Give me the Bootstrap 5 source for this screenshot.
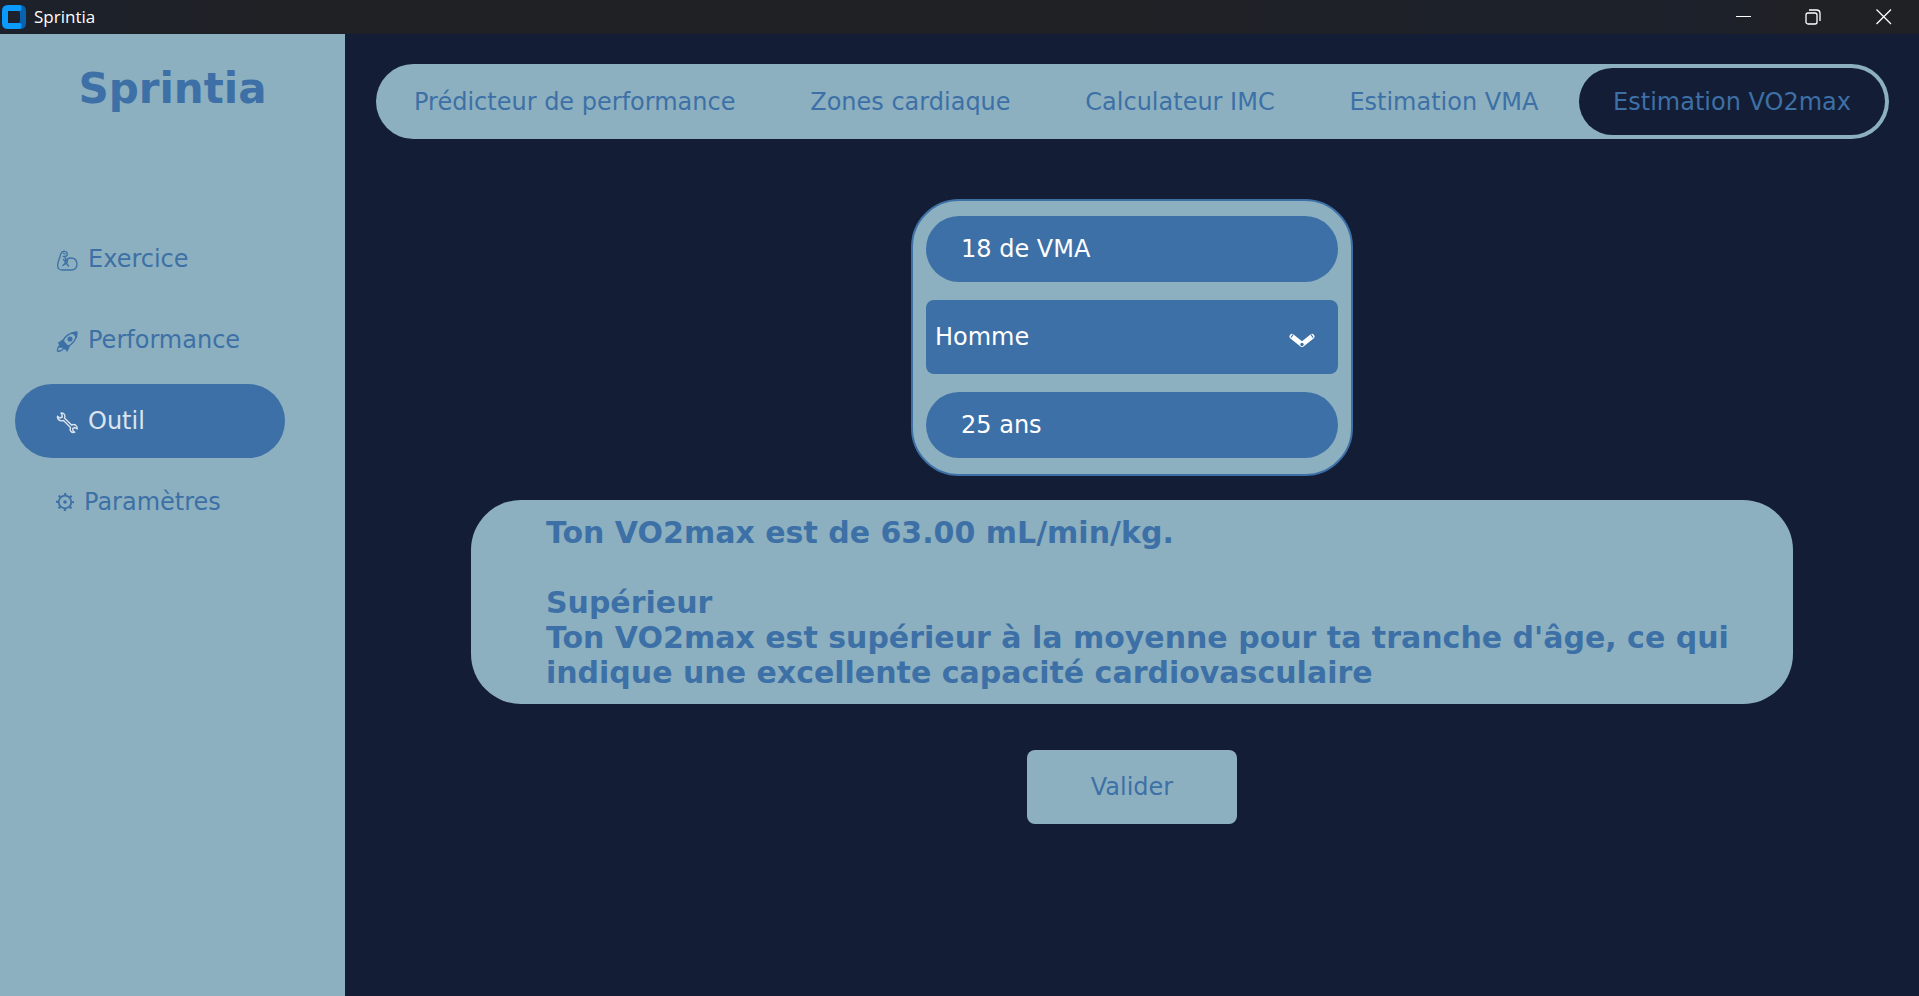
<!DOCTYPE html>
<html lang="fr">
<head>
<meta charset="utf-8">
<meta name="viewport" content="width=device-width, initial-scale=1">
<title>Sprintia</title>
<link href="https://cdn.jsdelivr.net/npm/bootstrap@5.3.0/dist/css/bootstrap.min.css" rel="stylesheet">
<style>
  :root { --night: #131d35; --mist: #8cb0c0; --ocean: #3d70a6; }
  body { background: var(--night); color: var(--ocean); font: 24px/28px "DejaVu Sans", sans-serif; }
  .titlebar { height: 34px; padding-left: 2px; background: linear-gradient(90deg, #1c212b, #202124 18%, #202124 50%, #1c212b 88%, #202124 95%); color: #fff; font: 17px/24px "Open Sans", sans-serif; }
  .titlebar button { width: 70px; height: 34px; }
  .sidebar { width: 345px; background: var(--mist); }
  .brand { margin: 30px 0 108px; font-size: 42px; line-height: 50px; font-weight: 700; }
  .side-nav { margin-left: 15px; }
  .side-link { width: 270px; height: 74px; margin-bottom: 7px; padding-left: 41px; border-radius: 37px; color: var(--ocean); }
  .side-link svg { margin-right: 8px; }
  .side-link.active { background: var(--ocean); color: #dce4ee; }
  .tabs { margin: 30px 30px 0 31px; background: var(--mist); border-radius: 38px; padding: 4px; }
  .tab-link { height: 67px; padding: 0 34px; border-radius: 34px; color: var(--ocean); }
  .tab-link.active { background: var(--night); }
  .form-panel { width: 442px; margin-top: 60px; padding: 15px 13px 16px; gap: 18px; background: var(--mist); border: 2px solid var(--ocean); border-radius: 48px; }
  .field { height: 66px; padding: 0 35px; border: 0; border-radius: 33px; background: var(--ocean); color: #fff; }
  .field-select { display: block; height: 74px; padding: 0 9px; border: 0; border-radius: 8px; background: var(--ocean); color: #fff; appearance: none; }
  .chevron { right: 23px; top: 33px; pointer-events: none; }
  .result { width: 84%; margin-top: 24px; padding: 15px 55px 14px 75px; border-radius: 50px; background: var(--mist); font-size: 30px; line-height: 35px; }
  .submit { width: 210px; height: 74px; margin-top: 46px; border: 0; border-radius: 8px; background: var(--mist); color: var(--ocean); }
</style>
</head>
<body class="d-flex flex-column min-vh-100">
<header class="titlebar d-flex align-items-center flex-shrink-0">
  <svg class="me-2" width="24" height="24" viewBox="0 0 24 24" aria-hidden="true">
    <path d="M17 0h1q6 0 6 6v12q0 6-6 6h-1z" fill="#0763b0"/>
    <path d="M6 0h11q2.500 0 2.500 3t-2.500 3H6v12h11q2.500 0 2.500 3t-2.500 3H6q-6 0-6-6V6q0-6 6-6z" fill="#0b9bff"/>
    <rect x="6" y="6" width="12" height="12" rx="2" fill="#1c212b"/>
  </svg>
  <span>Sprintia</span>
  <div class="ms-auto d-flex">
    <button type="button" class="btn p-0 border-0 rounded-0 text-white d-flex align-items-center justify-content-center" aria-label="Réduire"><svg width="16" height="16"><path d="M0 7.500h15" stroke="currentColor"/></svg></button>
    <button type="button" class="btn p-0 border-0 rounded-0 text-white d-flex align-items-center justify-content-center" aria-label="Restaurer"><svg width="18" height="16" fill="none" stroke="currentColor" stroke-width="1.300"><rect x="1" y="4" width="11" height="11" rx="2"/><path d="M4 1h7.500q3.500 0 3.500 3.500V12"/></svg></button>
    <button type="button" class="btn p-0 border-0 rounded-0 text-white d-flex align-items-center justify-content-center" aria-label="Fermer"><svg width="16" height="16"><path d="M.5.5l14.500 14.500M15 .5l-14.500 14.500" stroke="currentColor" stroke-width="1.300"/></svg></button>
  </div>
</header>
<div class="d-flex flex-grow-1">
  <aside class="sidebar flex-shrink-0 d-flex flex-column">
    <h1 class="brand text-center">Sprintia</h1>
    <nav class="side-nav d-flex flex-column">
      <a href="#" class="side-link d-flex align-items-center text-decoration-none">
        <svg class="mt-1" width="24" height="22" viewBox="-1 0 24 22" fill="none" stroke="currentColor" stroke-width="1.300" stroke-linecap="round" stroke-linejoin="round" aria-hidden="true"><path d="M4 3.500Q5 1 7.500 1.300 10.500 2 10.300 4.500 10 6.500 7.500 6.500H6.300M4 3.500L1.200 12Q0 16.500 1.500 18.500 2.500 20 5 20h9q6 0 6-6.200Q19.500 8 14 8q-3.500 0-5 2.500M7.800 6.500L8.800 10Q9 14 5.800 15.500M6.500 9.500l5 6.500M10.500 9.500q.5 3-2 4.500M6.500 3.500L8 4"/></svg>
        Exercice</a>
      <a href="#" class="side-link d-flex align-items-center text-decoration-none">
        <svg class="mt-1" width="24" height="22" viewBox="-1 0 24 22" fill="none" stroke="currentColor" stroke-width="1.300" stroke-linejoin="round" aria-hidden="true"><path d="M19.500 1.500Q12 1.500 7.500 7L4.500 12l4.500 4.500 5-3q6-5 5.500-12z"/><path d="M15 2l5-1-.5 5.500Q18 3 15 2zM7 8.500L1.500 12l4 0zM4 13l3-2 4 4.500-1.500 3.500-2-3zM9.500 16l.5 4 2.500-5.500zM2.500 12.500l4 .5 2 2-1 3-2-2-3 0z" fill="currentColor"/><circle cx="13" cy="8" r="1.900" fill="currentColor"/><path d="M3 14.500q-3 2-2.500 5.700 4 .5 6-2.700"/></svg>
        Performance</a>
      <a href="#" class="side-link active d-flex align-items-center text-decoration-none" aria-current="page">
        <svg class="mt-1" width="24" height="22" viewBox="-1 0 24 22" fill="none" stroke="currentColor" stroke-width="1.400" stroke-linejoin="round" aria-hidden="true"><path d="M4 1Q6.500 .8 7.500 2.500 8.300 4 7.500 6L14.500 13q2-1 4 0 2 1.300 1.700 4L18 15.500l-2.300.8.3 2.400 1.800 1.500q-2.500.8-4-1-1.200-1.700-.3-3.700L6.500 8.500q-2 .8-3.800-.2Q.2 7 .5 4.200L3 6l2.300-1L5 2.800z"/></svg>
        Outil</a>
      <a href="#" class="side-link d-flex align-items-center text-decoration-none">
        <svg width="20" height="20" viewBox="0 0 20 20" fill="none" stroke="currentColor" aria-hidden="true"><circle cx="9" cy="10" r="6.300" stroke-width="1.800"/><circle cx="9" cy="10" r="7.900" stroke-width="2.200" stroke-dasharray="2.200 4.004" stroke-dashoffset="1.100"/><circle cx="9" cy="10" r="1.800" fill="currentColor" stroke="none"/></svg>
        Paramètres</a>
    </nav>
  </aside>
  <main class="flex-grow-1 d-flex flex-column">
    <nav class="tabs d-flex justify-content-between" aria-label="Outils">
      <a href="#" class="tab-link d-flex align-items-center text-decoration-none">Prédicteur de performance</a>
      <a href="#" class="tab-link d-flex align-items-center text-decoration-none">Zones cardiaque</a>
      <a href="#" class="tab-link d-flex align-items-center text-decoration-none">Calculateur IMC</a>
      <a href="#" class="tab-link d-flex align-items-center text-decoration-none">Estimation VMA</a>
      <a href="#" class="tab-link active d-flex align-items-center text-decoration-none" aria-current="page">Estimation VO2max</a>
    </nav>
    <form class="d-flex flex-column align-items-center">
      <div class="form-panel d-flex flex-column">
        <input class="field w-100" type="text" aria-label="VMA" value="18 de VMA">
        <div class="position-relative">
          <select class="field-select w-100" aria-label="Sexe"><option>Homme</option><option>Femme</option></select>
          <svg class="chevron position-absolute" width="26" height="16" viewBox="0 0 26 16" fill="none" aria-hidden="true"><path d="M3 3.500l10 8 10-8" stroke="#fff" stroke-width="5" stroke-linecap="round" stroke-linejoin="round"/><path d="M2 4.500l2-3M22 1.500l2 3" stroke="#3d70a6" stroke-width="1.200"/><circle cx="13" cy="11.500" r="1.700" fill="#3d70a6"/></svg>
        </div>
        <input class="field w-100" type="text" aria-label="Âge" value="25 ans">
      </div>
      <output class="result d-block fw-bold">Ton VO2max est de 63.00 mL/min/kg.<br><br>Supérieur<br>Ton VO2max est supérieur à la moyenne pour ta tranche d'âge, ce qui indique une excellente capacité cardiovasculaire</output>
      <button type="button" class="submit">Valider</button>
    </form>
  </main>
</div>
<script src="https://cdn.jsdelivr.net/npm/bootstrap@5.3.0/dist/js/bootstrap.bundle.min.js"></script>
</body>
</html>
